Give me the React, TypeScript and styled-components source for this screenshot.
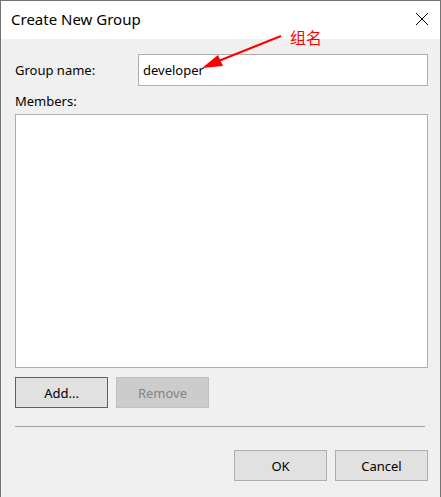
import { createGlobalStyle, styled } from "styled-components";

const GlobalStyle = createGlobalStyle`
  html, body {
    margin: 0;
    padding: 0;
    background: #ffffff;
  }
  body {
    font-family: "Noto Sans", "Liberation Sans", sans-serif;
  }
`;

const Window = styled.div`
  position: relative;
  width: 441px;
  height: 497px;
  box-sizing: border-box;
  border: 1px solid #737373;
  border-bottom: none;
  display: flex;
  flex-direction: column;
  overflow: hidden;
`;

const TitleBar = styled.div`
  height: 38px;
  flex: none;
  background: #ffffff;
  display: flex;
  align-items: center;
  justify-content: space-between;
  padding: 0 11px 0 10px;
`;

const Title = styled.div`
  font-size: 15px;
  color: #000000;
  padding-bottom: 2px;
`;

const CloseButton = styled.div`
  width: 14px;
  height: 14px;
  display: flex;
  align-items: center;
  justify-content: center;
  margin-bottom: 3px;
`;

const Body = styled.div`
  flex: 1;
  background: #f0f0f0;
  padding: 15px 12px 0 14px;
  display: flex;
  flex-direction: column;
`;

const FieldRow = styled.div`
  display: flex;
  align-items: center;
`;

const Label = styled.label`
  font-size: 13px;
  color: #000000;
  width: ${(p: { $width?: number }) => (p.$width ? `${p.$width}px` : "auto")};
  flex: none;
  line-height: 16px;
`;

const TextBox = styled.div`
  flex: 1;
  height: 32px;
  box-sizing: border-box;
  border: 1px solid #adadad;
  background: #ffffff;
  display: flex;
  align-items: center;
  padding-left: 4px;
  font-size: 13px;
  color: #000000;
`;

const MembersLabel = styled(Label)`
  margin: 7px 0 5px;
`;

const ListBox = styled.div`
  height: 254px;
  box-sizing: border-box;
  border: 1px solid #adadad;
  background: #ffffff;
`;

const ButtonRow = styled.div<{ $end?: boolean }>`
  display: flex;
  gap: 8px;
  margin-top: ${(p) => (p.$end ? "0" : "9px")};
  justify-content: ${(p) => (p.$end ? "flex-end" : "flex-start")};
`;

const Button = styled.div<{ $variant?: "default" | "focused" | "disabled" }>`
  width: 93px;
  height: 31px;
  box-sizing: border-box;
  display: flex;
  align-items: center;
  justify-content: center;
  font-size: 13px;
  border: 1px solid
    ${(p) =>
      p.$variant === "focused"
        ? "#0078d7"
        : p.$variant === "disabled"
        ? "#bfbfbf"
        : "#adadad"};
  background: ${(p) => (p.$variant === "disabled" ? "#cccccc" : "#e1e1e1")};
  color: ${(p) => (p.$variant === "disabled" ? "#838383" : "#000000")};
`;

const Separator = styled.div`
  height: 1px;
  background: #a0a0a0;
  margin: 18px 3px 23px 0;
`;

const Annotation = styled.svg`
  position: absolute;
  left: 0;
  top: 0;
  pointer-events: none;
`;

const AnnotationText = styled.div`
  position: absolute;
  left: 289px;
  top: 24px;
  font-family: "Noto Sans CJK SC", sans-serif;
  font-size: 16px;
  color: #ff0000;
  pointer-events: none;
`;

export default function App() {
  return (
    <>
      <GlobalStyle />
      <Window>
        <TitleBar>
          <Title>Create New Group</Title>
          <CloseButton>
            <svg width="14" height="14" viewBox="0 0 14 14">
              <path d="M1 1 L13 13 M13 1 L1 13" stroke="#000" strokeWidth="1" />
            </svg>
          </CloseButton>
        </TitleBar>
        <Body>
          <FieldRow>
            <Label $width={123}>Group name:</Label>
            <TextBox>developer</TextBox>
          </FieldRow>
          <MembersLabel>Members:</MembersLabel>
          <ListBox />
          <ButtonRow>
            <Button $variant="focused">Add...</Button>
            <Button $variant="disabled">Remove</Button>
          </ButtonRow>
          <Separator />
          <ButtonRow $end>
            <Button>OK</Button>
            <Button>Cancel</Button>
          </ButtonRow>
        </Body>
        <Annotation width="441" height="497" viewBox="0 0 441 497">
          <line x1="280" y1="35" x2="215" y2="61" stroke="#ff0000" strokeWidth="2" />
          <polygon points="201,67 222,65 217,54" fill="#ff0000" />
        </Annotation>
        <AnnotationText>组名</AnnotationText>
      </Window>
    </>
  );
}
